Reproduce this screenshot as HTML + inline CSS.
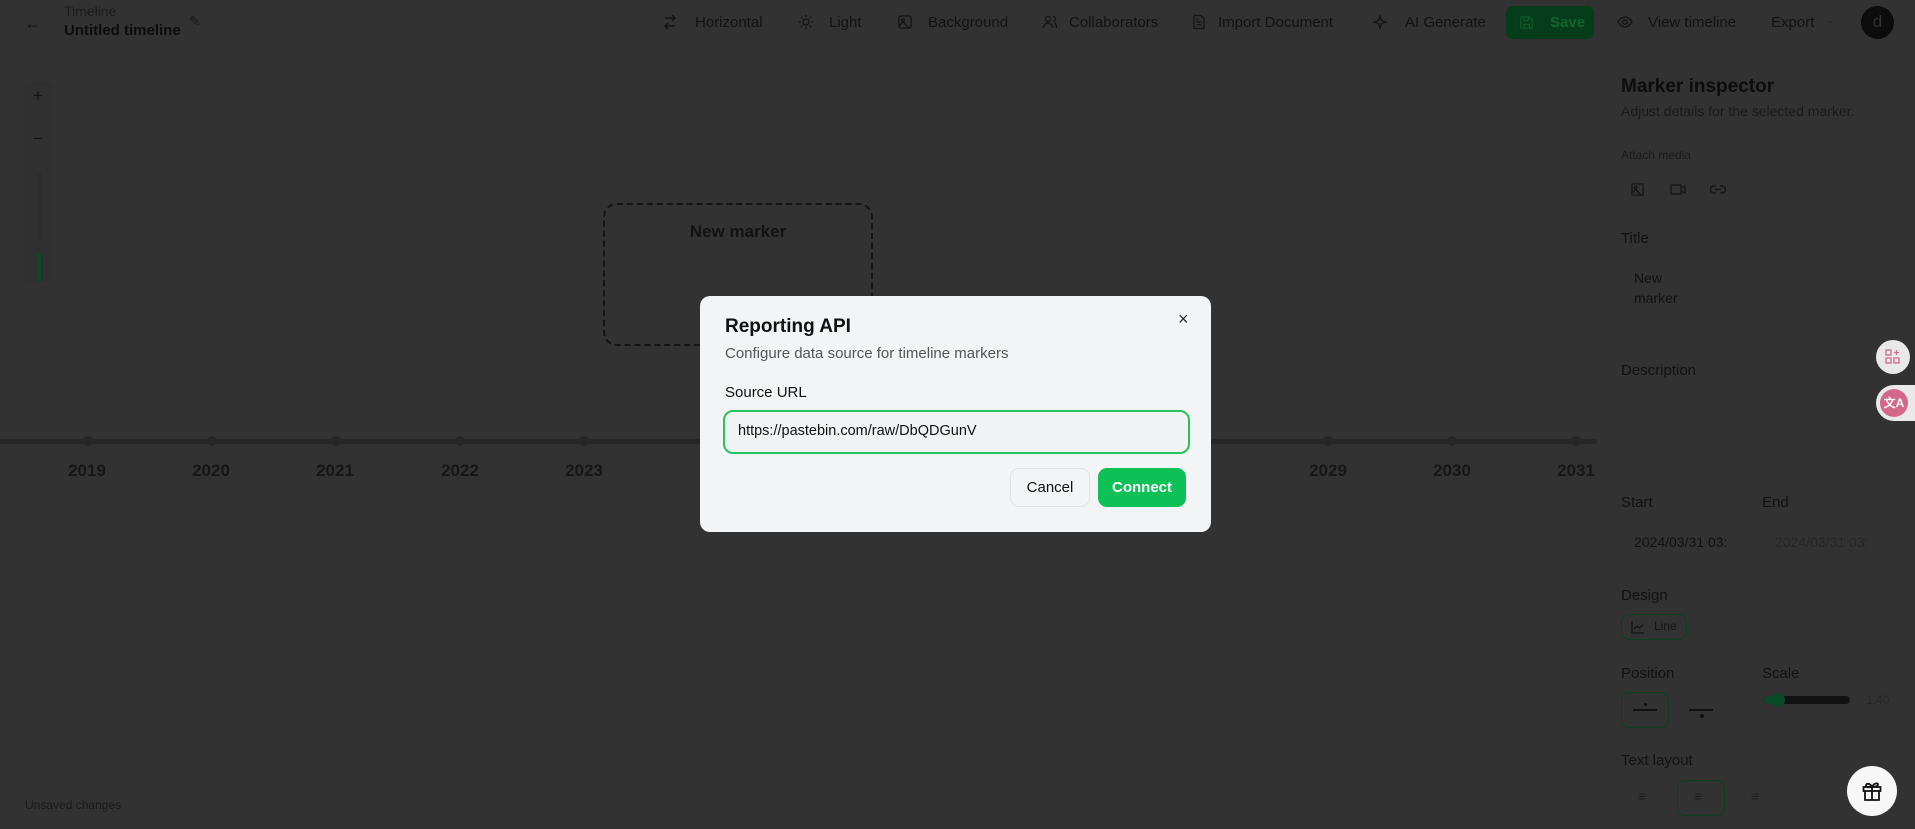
<!DOCTYPE html>
<html><head><meta charset="utf-8"><style>
*{box-sizing:border-box;margin:0;padding:0}
body{width:1915px;height:829px;overflow:hidden;background:#323232;font-family:"Liberation Sans",sans-serif;color:#0f0f0f;position:relative}
.a{position:absolute;white-space:nowrap}
.nav{font-size:15px;color:#121212;top:14px}
svg{display:block}
.yr{font-size:17px;font-weight:bold;color:#161616;top:461px;width:60px;text-align:center}
.dot{position:absolute;top:436px;width:10px;height:10px;border-radius:50%;background:#262626}
.lbl{font-size:15px;color:#111}
</style></head><body>
<!-- top bar -->
<div class="a" style="left:24px;top:13px;font-size:18px;color:#111">←</div>
<div class="a" style="left:64px;top:3px;font-size:14px;color:#1c1c1c">Timeline</div>
<div class="a" style="left:64px;top:22px;font-size:15px;font-weight:bold;color:#0d0d0d">Untitled timeline</div>
<div class="a" style="left:189px;top:13px;font-size:14px;color:#1a1a1a">✎</div>
<svg class="a" style="left:662px;top:14px" width="16" height="16" viewBox="0 0 16 16" fill="none" stroke="#141414" stroke-width="1.4"><path d="M3 4h10M10 1l3 3-3 3M13 12H3M6 9l-3 3 3 3"/></svg>
<div class="a nav" style="left:695px">Horizontal</div>
<svg class="a" style="left:798px;top:14px" width="16" height="16" viewBox="0 0 16 16" fill="none" stroke="#141414" stroke-width="1.3"><circle cx="8" cy="8" r="3"/><path d="M8 1v2M8 13v2M1 8h2M13 8h2M3 3l1.5 1.5M11.5 11.5L13 13M3 13l1.5-1.5M11.5 4.5L13 3"/></svg>
<div class="a nav" style="left:829px">Light</div>
<svg class="a" style="left:897px;top:14px" width="16" height="16" viewBox="0 0 16 16" fill="none" stroke="#141414" stroke-width="1.3"><rect x="2" y="2" width="12" height="12" rx="1.5"/><circle cx="6" cy="6" r="1.3"/><path d="M2 12l4-4 6 6"/></svg>
<div class="a nav" style="left:928px">Background</div>
<svg class="a" style="left:1042px;top:14px" width="16" height="16" viewBox="0 0 16 16" fill="none" stroke="#141414" stroke-width="1.3"><circle cx="6" cy="5" r="2.5"/><path d="M1.5 14c0-3 2-5 4.5-5s4.5 2 4.5 5M11 2.5a2.5 2.5 0 010 5M13 9c1 1 1.5 3 1.5 5"/></svg>
<div class="a nav" style="left:1069px">Collaborators</div>
<svg class="a" style="left:1191px;top:14px" width="16" height="16" viewBox="0 0 16 16" fill="none" stroke="#141414" stroke-width="1.3"><path d="M3 1.5h7l3 3v10H3z M5.5 8h5M5.5 10.5h5M5.5 5.5h2"/></svg>
<div class="a nav" style="left:1218px">Import Document</div>
<svg class="a" style="left:1372px;top:14px" width="16" height="16" viewBox="0 0 16 16" fill="none" stroke="#141414" stroke-width="1.3"><path d="M8 2l1.5 4.5L14 8l-4.5 1.5L8 14l-1.5-4.5L2 8l4.5-1.5z"/></svg>
<div class="a nav" style="left:1405px">AI Generate</div>
<div class="a" style="left:1506px;top:6px;width:88px;height:33px;border-radius:7px;background:#053d1a"></div>
<svg class="a" style="left:1519px;top:15px" width="15" height="15" viewBox="0 0 16 16" fill="none" stroke="#0f5a2a" stroke-width="1.4"><path d="M2 2h9l3 3v9H2z M5 2v4h5V2M5 14v-4h6v4"/></svg>
<div class="a nav" style="left:1550px;color:#13652f;font-weight:bold">Save</div>
<svg class="a" style="left:1617px;top:14px" width="16" height="16" viewBox="0 0 16 16" fill="none" stroke="#141414" stroke-width="1.3"><path d="M1 8s2.5-5 7-5 7 5 7 5-2.5 5-7 5-7-5-7-5z"/><circle cx="8" cy="8" r="2.2"/></svg>
<div class="a nav" style="left:1648px">View timeline</div>
<div class="a nav" style="left:1771px">Export</div>
<div class="a" style="left:1826px;top:15px;font-size:10px;color:#222">⌄</div>
<div class="a" style="left:1861px;top:6px;width:33px;height:33px;border-radius:50%;background:#0c0c0c;color:#333;font-size:17px;text-align:center;line-height:31px">d</div>

<!-- zoom controls -->
<div class="a" style="left:24px;top:82px;width:28px;height:200px;border-radius:6px;background:#303030"></div>
<div class="a" style="left:33px;top:86px;font-size:17px;color:#141414">+</div>
<div class="a" style="left:33px;top:129px;font-size:17px;color:#141414">−</div>
<div class="a" style="left:37px;top:172px;width:5px;height:110px;background:#2d2d2d;border-radius:3px"></div>
<div class="a" style="left:37px;top:252px;width:4px;height:30px;background:#0b4a26;border-radius:2px"></div>
<div class="a" style="left:33px;top:241px;width:12px;height:12px;border-radius:50%;background:#303030"></div>

<!-- marker box -->
<div class="a" style="left:603px;top:203px;width:270px;height:143px;border:2px dashed #141414;border-radius:14px"></div>
<div class="a" style="left:603px;top:222px;width:270px;text-align:center;font-size:17px;font-weight:bold;color:#121212">New marker</div>

<!-- timeline -->
<div class="a" style="left:0;top:439px;width:1597px;height:5px;background:#272727"></div>
<div class="dot" style="left:83px"></div><div class="dot" style="left:207px"></div><div class="dot" style="left:331px"></div><div class="dot" style="left:455px"></div><div class="dot" style="left:579px"></div><div class="dot" style="left:1323px"></div><div class="dot" style="left:1447px"></div><div class="dot" style="left:1571px"></div>
<div class="a yr" style="left:57px">2019</div>
<div class="a yr" style="left:181px">2020</div>
<div class="a yr" style="left:305px">2021</div>
<div class="a yr" style="left:430px">2022</div>
<div class="a yr" style="left:554px">2023</div>
<div class="a yr" style="left:1298px">2029</div>
<div class="a yr" style="left:1422px">2030</div>
<div class="a yr" style="left:1546px">2031</div>

<div class="a" style="left:25px;top:798px;font-size:12px;color:#1a1a1a">Unsaved changes</div>

<!-- inspector -->
<div class="a" style="left:1621px;top:76px;font-size:19px;font-weight:bold;color:#0d0d0d">Marker inspector</div>
<div class="a" style="left:1621px;top:103px;font-size:14px;color:#1a1a1a">Adjust details for the selected marker.</div>
<div class="a" style="left:1621px;top:148px;font-size:12px;color:#1a1a1a">Attach media</div>
<svg class="a" style="left:1630px;top:182px" width="15" height="15" viewBox="0 0 16 16" fill="none" stroke="#161616" stroke-width="1.4"><rect x="2" y="2" width="12" height="12" rx="1"/><circle cx="6" cy="6" r="1.3"/><path d="M2 12l4-4 6 6"/></svg>
<svg class="a" style="left:1670px;top:182px" width="16" height="15" viewBox="0 0 16 15" fill="none" stroke="#161616" stroke-width="1.4"><rect x="1" y="3" width="10" height="9" rx="1"/><path d="M11 6l4-2v7l-4-2"/></svg>
<svg class="a" style="left:1710px;top:182px" width="16" height="15" viewBox="0 0 16 15" fill="none" stroke="#161616" stroke-width="1.4"><path d="M6 4H4a3.5 3.5 0 000 7h2M10 4h2a3.5 3.5 0 010 7h-2M5 7.5h6"/></svg>
<div class="a lbl" style="left:1621px;top:230px">Title</div>
<div class="a" style="left:1634px;top:268px;font-size:14px;color:#111;line-height:20px">New<br>marker</div>
<div class="a lbl" style="left:1621px;top:362px">Description</div>
<div class="a lbl" style="left:1621px;top:494px">Start</div>
<div class="a lbl" style="left:1762px;top:494px">End</div>
<div class="a" style="left:1634px;top:534px;font-size:14px;color:#111">2024/03/31 03:</div>
<div class="a" style="left:1775px;top:534px;font-size:14px;color:#262626">2024/03/31 03:</div>
<div class="a lbl" style="left:1621px;top:587px">Design</div>
<div class="a" style="left:1621px;top:614px;width:66px;height:26px;border:1px solid #0c3f1f;border-radius:8px"></div>
<svg class="a" style="left:1631px;top:620px" width="14" height="14" viewBox="0 0 14 14" fill="none" stroke="#141414" stroke-width="1.3"><path d="M1 1v12h12M3 9l3-3 2 2 4-3"/></svg>
<div class="a" style="left:1654px;top:619px;font-size:12px;color:#151515">Line</div>
<div class="a lbl" style="left:1621px;top:665px">Position</div>
<div class="a lbl" style="left:1762px;top:665px">Scale</div>
<div class="a" style="left:1621px;top:692px;width:48px;height:36px;border:1px solid #0c3f1f;border-radius:8px"></div>
<div class="a" style="left:1633px;top:709px;width:24px;height:2px;background:#111"></div>
<div class="a" style="left:1644px;top:703px;width:3px;height:3px;background:#111;border-radius:50%"></div>
<div class="a" style="left:1689px;top:709px;width:24px;height:2px;background:#111"></div>
<div class="a" style="left:1700px;top:714px;width:4px;height:4px;background:#111;border-radius:50%"></div>
<div class="a" style="left:1764px;top:696px;width:86px;height:8px;background:#121212;border-radius:4px"></div>
<div class="a" style="left:1764px;top:696px;width:18px;height:8px;background:#0b4a26;border-radius:4px"></div>
<div class="a" style="left:1771px;top:693px;width:14px;height:14px;background:#0b4a26;border-radius:50%"></div>
<div class="a" style="left:1866px;top:693px;font-size:12px;color:#262626">1.40</div>
<div class="a lbl" style="left:1621px;top:752px">Text layout</div>
<div class="a" style="left:1677px;top:780px;width:48px;height:36px;border:1px solid #0c3f1f;border-radius:8px"></div>
<div class="a" style="left:1638px;top:788px;font-size:14px;color:#1e1e1e">≡</div>
<div class="a" style="left:1694px;top:788px;font-size:14px;color:#1e1e1e">≡</div>
<div class="a" style="left:1751px;top:788px;font-size:14px;color:#1e1e1e">≡</div>

<!-- floating -->
<div class="a" style="left:1876px;top:340px;width:34px;height:34px;border-radius:50%;background:#e9e9e9"></div>
<svg class="a" style="left:1884px;top:348px" width="18" height="18" viewBox="0 0 18 18" fill="none" stroke="#d06a8a" stroke-width="1.3"><rect x="2" y="2" width="5" height="5"/><rect x="2" y="10" width="5" height="5"/><rect x="10" y="10" width="5" height="5"/><path d="M12.5 2v5M10 4.5h5"/></svg>
<div class="a" style="left:1876px;top:385px;width:40px;height:36px;border-radius:18px 0 0 18px;background:#e9e9e9"></div>
<div class="a" style="left:1880px;top:389px;width:28px;height:28px;border-radius:50%;background:#d4678a;color:#fff;font-size:12px;font-weight:bold;text-align:center;line-height:28px">文A</div>
<div class="a" style="left:1847px;top:766px;width:50px;height:50px;border-radius:50%;background:#f7f7f7"></div>
<svg class="a" style="left:1861px;top:780px" width="22" height="22" viewBox="0 0 22 22" fill="none" stroke="#111" stroke-width="1.8"><rect x="2.5" y="7" width="17" height="4"/><path d="M4 11v9h14v-9M11 7v13M11 7c-2-4-6-4-6-1.5S9 7 11 7c2 0 6-.5 6-2.5S13 3 11 7"/></svg>

<!-- modal -->
<div class="a" style="left:700px;top:296px;width:511px;height:236px;background:#f3f4f5;border-radius:10px"></div>
<div class="a" style="left:725px;top:316px;font-size:19px;font-weight:bold;color:#111">Reporting API</div>
<div class="a" style="left:725px;top:345px;font-size:15px;color:#555">Configure data source for timeline markers</div>
<div class="a" style="left:1178px;top:309px;font-size:18px;color:#333">×</div>
<div class="a" style="left:725px;top:384px;font-size:15px;color:#111">Source URL</div>
<div class="a" style="left:723px;top:410px;width:467px;height:44px;border:2px solid #22c55e;border-radius:10px;background:#f1f2f3"></div>
<div class="a" style="left:738px;top:423px;font-size:14.5px;color:#111">https://pastebin.com/raw/DbQDGunV</div>
<div class="a" style="left:1010px;top:468px;width:80px;height:39px;border:1px solid #e2e3e5;border-radius:9px;background:#f3f4f5;font-size:15px;color:#111;text-align:center;line-height:37px">Cancel</div>
<div class="a" style="left:1098px;top:468px;width:88px;height:39px;border-radius:9px;background:#0dc157;font-size:15px;font-weight:bold;color:#fff;text-align:center;line-height:39px">Connect</div>
</body></html>
